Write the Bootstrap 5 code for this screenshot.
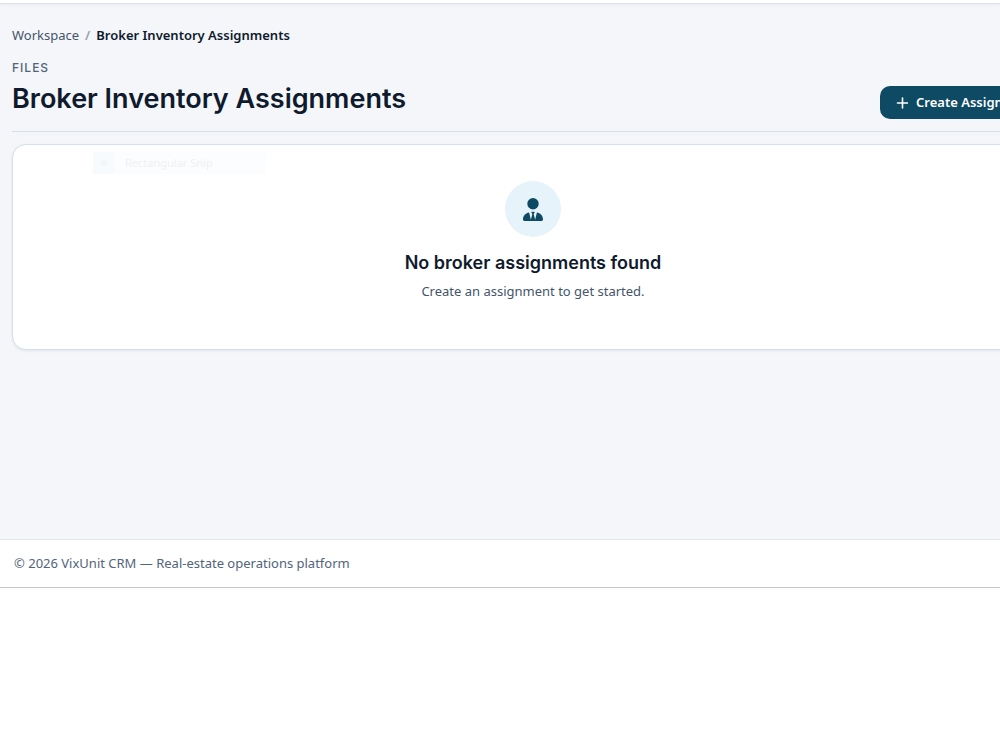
<!DOCTYPE html>
<html lang="en">
<head>
<meta charset="utf-8">
<meta name="viewport" content="width=device-width, initial-scale=1">
<title>Broker Inventory Assignments</title>
<link href="https://cdn.jsdelivr.net/npm/bootstrap@5.3.0/dist/css/bootstrap.min.css" rel="stylesheet">
<style>
  body { font-family: "Noto Sans", sans-serif; font-size: 13px; line-height: 20px; color: #44556b; background: #fff; }
  .topbar { height: 4px; background: #fff; border-bottom: 1px solid #dde3ea; box-shadow: 0 1px 3px rgba(15, 30, 50, .06); position: relative; }
  .workspace { background: #f4f6fa; padding: 21px 12px 189px; }
  /* the content column is wider than the window and runs past its right edge */
  .content-wide { margin-right: -66px; }
  .crumbs { --bs-breadcrumb-divider-color: #94a0b0; --bs-breadcrumb-item-padding-x: 6px; --bs-breadcrumb-font-size: 13px; margin-bottom: 15px; }
  .crumbs a { color: #44556b; }
  .crumbs .active { color: #0f1b2d; font-weight: 600; }
  .eyebrow { font: 500 12px/16px Inter, sans-serif; letter-spacing: 1px; color: #52647c; }
  .display-font { font-family: Inter, sans-serif; font-weight: 600; color: #0f1b2d; }
  .page-head { border-bottom: 1px solid #d5dfea; padding-bottom: 12px; margin-bottom: 12px; }
  .page-title { font-size: 27px; line-height: 36px; margin: 5px 0 2px; }
  .btn-create { --bs-btn-bg: #0e4a63; --bs-btn-hover-bg: #0b3c51; --bs-btn-color: #fff; --bs-btn-hover-color: #fff; width: 174px; height: 33px; padding: 0 16px; border: 0; border-radius: 10px; font-size: 13px; font-weight: 600; }
  .panel { border: 1px solid #d3e0ed; border-radius: 14px; padding: 36px 24px 48px; box-shadow: 0 1px 3px rgba(15, 30, 50, .08); }
  .avatar-disc { width: 56px; height: 56px; background: #e6f3fa; color: #0e4a63; }
  .empty-title { font-size: 18px; line-height: 24px; margin: 14px 0 6px; }
  .snip-tip { left: 80px; top: 7px; width: 173px; height: 22px; gap: 10px; background: #fbfdff; color: #f0f1f3; font-size: 11px; }
  .snip-icon { width: 22px; height: 22px; background: #f7fbfe; }
  .site-footer { border-top: 1px solid #e2e6ec; border-bottom: 1px solid #c4c7ca; padding: 13px 14px 14px; color: #52647c; }
</style>
</head>
<body>
<div class="topbar"></div>
<main class="workspace overflow-hidden">
  <div class="content-wide">
    <nav aria-label="Breadcrumb">
      <ol class="breadcrumb crumbs">
        <li class="breadcrumb-item"><a href="#" class="text-decoration-none">Workspace</a></li>
        <li class="breadcrumb-item active" aria-current="page">Broker Inventory Assignments</li>
      </ol>
    </nav>
    <header class="page-head d-flex justify-content-between align-items-end">
      <div>
        <div class="eyebrow">FILES</div>
        <h1 class="page-title display-font">Broker Inventory Assignments</h1>
      </div>
      <button type="button" class="btn btn-create d-flex align-items-center gap-2 text-nowrap">
        <svg width="12" height="12" viewBox="0 0 12 12" fill="none" stroke="currentColor" stroke-width="1.6" stroke-linecap="round" aria-hidden="true"><path d="M6.500 1v10M1.500 6h10"/></svg>
        Create Assignment
      </button>
    </header>
    <section class="card panel align-items-center text-center">
      <div class="snip-tip position-absolute d-flex align-items-center" aria-hidden="true">
        <span class="snip-icon d-flex align-items-center justify-content-center"><svg width="6" height="6" viewBox="0 0 6 6"><circle cx="3" cy="3" r="3" fill="#f3f5f7"/></svg></span>
        <span>Rectangular Snip</span>
      </div>
      <div class="avatar-disc rounded-circle d-flex align-items-center justify-content-center">
        <svg width="20" height="23" viewBox="0 0 448 512" fill="currentColor" aria-hidden="true"><path d="M96 128a128 128 0 1 0 256 0A128 128 0 1 0 96 128zm94.5 200.200l18.600 31L175.800 483.100l-36-146.900c-2-8.100-9.800-13.400-17.900-11.300C51.900 342.400 0 405.800 0 481.300c0 17 13.800 30.700 30.700 30.700h386.600c17 0 30.700-13.800 30.700-30.700c0-75.500-51.900-138.900-121.900-156.400c-8.100-2-15.900 3.300-17.900 11.300l-36 146.900L238.900 359.200l18.600-31c6.400-10.700-1.300-24.200-13.700-24.200h-39.500c-12.400 0-20.100 13.600-13.700 24.200z"/></svg>
      </div>
      <h2 class="empty-title display-font">No broker assignments found</h2>
      <p class="mb-0">Create an assignment to get started.</p>
    </section>
  </div>
</main>
<footer class="site-footer">© 2026 VixUnit CRM — Real-estate operations platform</footer>
<script src="https://cdn.jsdelivr.net/npm/bootstrap@5.3.0/dist/js/bootstrap.bundle.min.js"></script>
</body>
</html>
